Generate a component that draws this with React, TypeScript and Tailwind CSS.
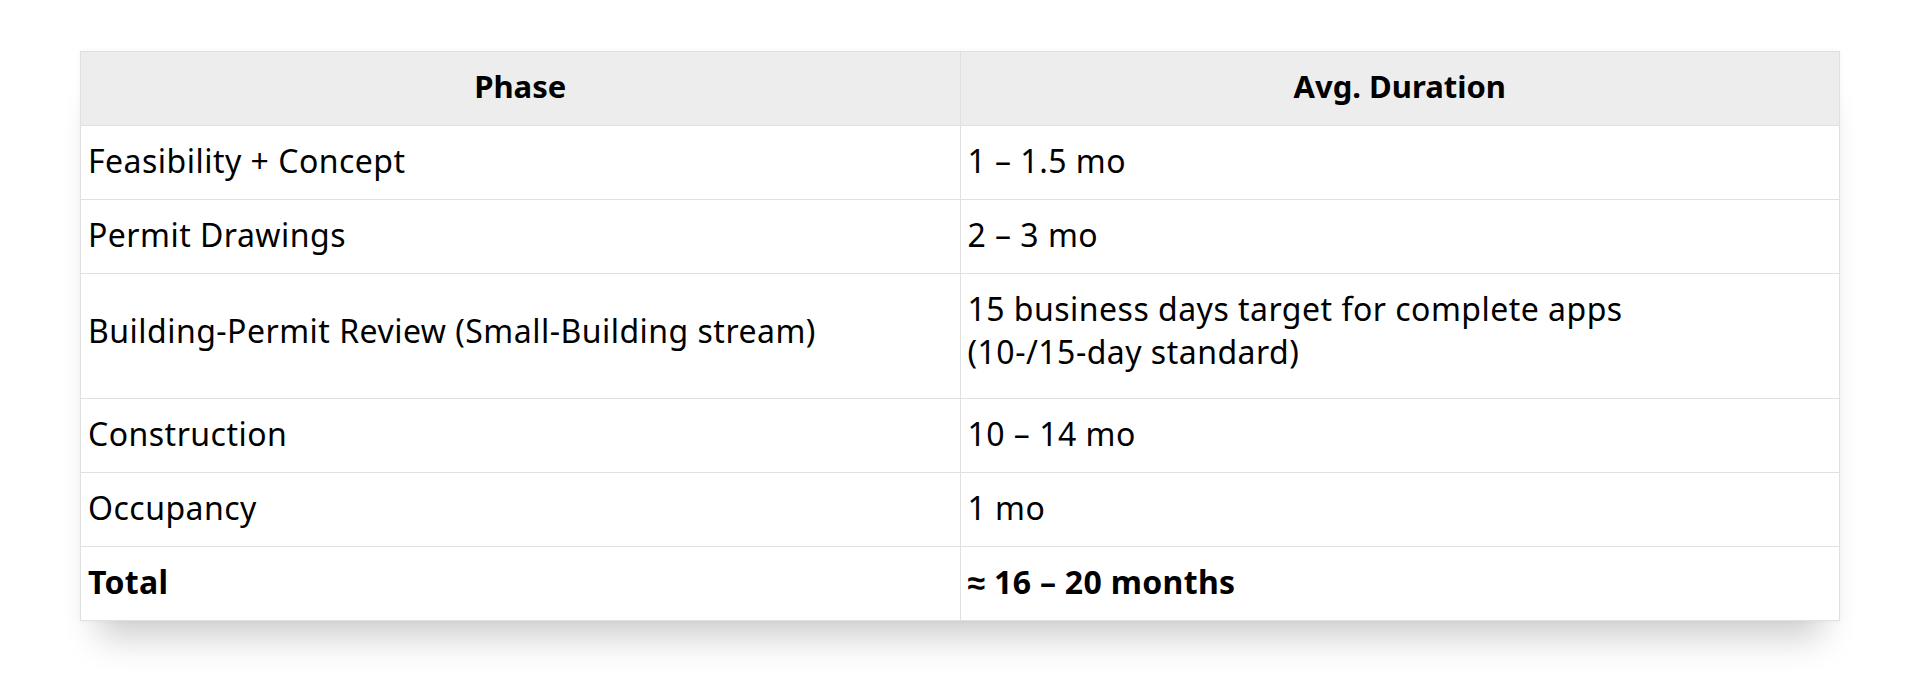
import React from 'react';

const rows: { phase: string; duration: React.ReactNode; tall?: boolean }[] = [
  { phase: 'Feasibility + Concept', duration: '1 – 1.5 mo' },
  { phase: 'Permit Drawings', duration: '2 – 3 mo' },
  {
    phase: 'Building-Permit Review (Small-Building stream)',
    duration: (
      <>
        15 business days target for complete apps
        <br />
        (10-/15-day standard)
      </>
    ),
    tall: true,
  },
  { phase: 'Construction', duration: '10 – 14 mo' },
  { phase: 'Occupancy', duration: '1 mo' },
];

export default function App() {
  return (
    <div className="w-[1920px] h-[688px] bg-white pt-[51px] px-[80px] font-['Noto_Sans',sans-serif] text-[32px] tracking-[0.015em] text-black">
      <table className="w-full table-fixed border-collapse bg-white shadow-[0_34px_34px_-18px_rgba(0,0,0,0.2),0_0_6px_rgba(0,0,0,0.04)]">
        <thead>
          <tr className="bg-[#ededed]">
            <th className="h-[74px] border border-[#e0e0e0] font-bold text-[31px] tracking-normal text-center pb-[4px]">Phase</th>
            <th className="h-[74px] border border-[#e0e0e0] font-bold text-[31px] tracking-normal text-center pb-[4px]">Avg. Duration</th>
          </tr>
        </thead>
        <tbody>
          {rows.map((r) => (
            <tr key={r.phase}>
              <td className={`${r.tall ? 'h-[125px] pb-[12px]' : 'h-[74px] pb-[4px]'} border border-[#e0e0e0] px-[7px] leading-[43px]`}>
                {r.phase}
              </td>
              <td className={`${r.tall ? 'h-[125px] pb-[12px]' : 'h-[74px] pb-[4px]'} border border-[#e0e0e0] px-[7px] leading-[43px]`}>
                {r.duration}
              </td>
            </tr>
          ))}
          <tr>
            <td className="h-[74px] border border-[#e0e0e0] px-[7px] pb-[4px] font-bold text-[32px] tracking-[0.01em]">Total</td>
            <td className="h-[74px] border border-[#e0e0e0] px-[7px] pb-[4px] font-bold text-[32px] tracking-[0.01em]">≈ 16 – 20 months</td>
          </tr>
        </tbody>
      </table>
    </div>
  );
}
